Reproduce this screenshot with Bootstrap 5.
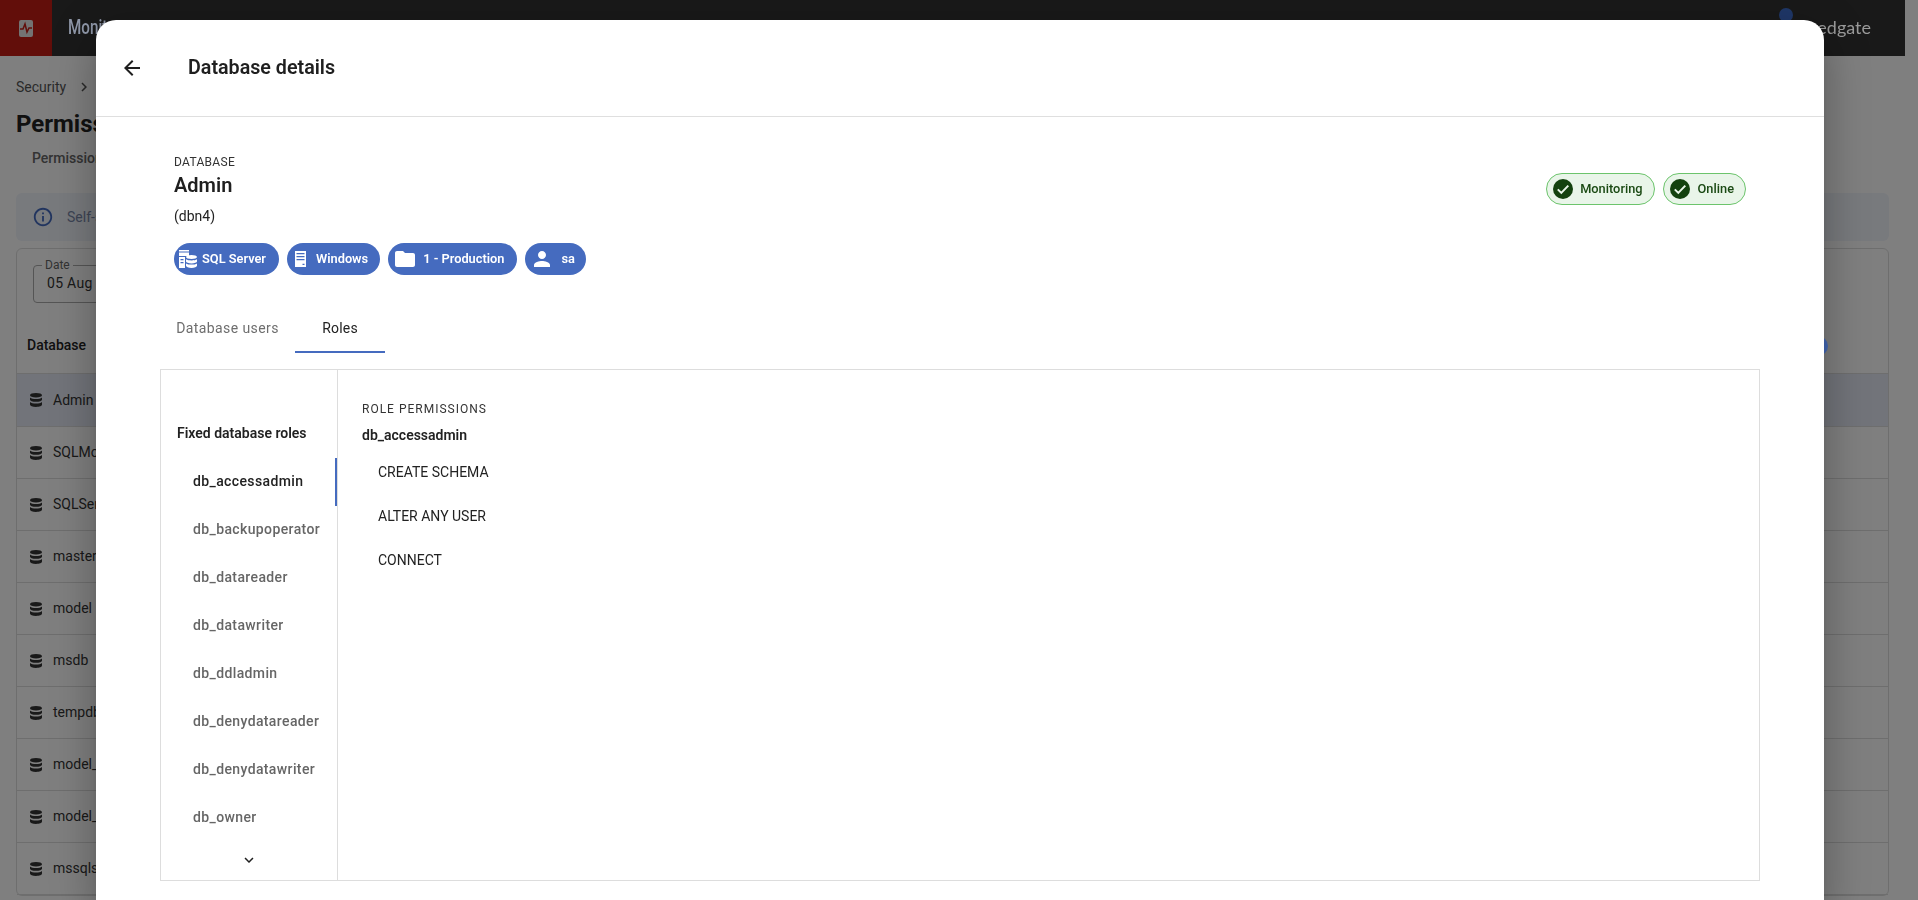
<!DOCTYPE html>
<html lang="en">
<head>
  <meta charset="UTF-8" />
  <meta name="viewport" content="width=device-width, initial-scale=1.0"/>
  <title>Database details</title>
  <link href="https://cdn.jsdelivr.net/npm/bootstrap@5.3.0/dist/css/bootstrap.min.css" rel="stylesheet">
  <style>
    body { font-family: Roboto, "Liberation Sans", sans-serif; font-size: 14px; color: #1f1f1f; overflow: hidden; height: 900px; background: #fff; }

    /* page behind the dialog */
    .page-wrap { width: 1905px; }
    .top-strip { height: 56px; background: #333; }
    .brand-box { width: 52px; background: #c41c14; }
    .brand-name { font-size: 20px; font-weight: 500; color: #8f97a8; margin-left: 16px; padding-top: 12px; transform: scaleX(.76); transform-origin: left; position: relative; z-index: 1051; }
    .vendor-dot { width: 14px; height: 14px; border-radius: 50%; background: #3f6fd0; margin-top: 8px; margin-right: 18px; }
    .vendor-name { font-size: 18px; color: #9a9a9a; margin-top: 15px; margin-right: 34px; line-height: 24px; font-family: Lato, sans-serif; position: relative; z-index: 1051; }
    .crumbs { padding: 17px 16px 0; height: 45px; line-height: 16px; color: #555; display: flex; gap: 9px; align-items: center; }
    .page-title { font-size: 24px; font-weight: 700; margin: 0; padding-left: 16px; line-height: 30px; height: 42px; color: #222; padding-top: 8px; }
    .page-tab { padding-left: 32px; color: #666; font-size: 14px; height: 50px; line-height: 20px; font-weight: 500; padding-top: 5px; }
    .notice { margin: 0 16px; height: 48px; background: #f0f4fb; border-radius: 6px; display: flex; align-items: center; padding-left: 16px; gap: 13px; color: #456bbf; }
    .notice span { color: #7a88a8; }
    .grid-card { margin: 7px 16px 0; border: 1px solid #ddd; border-radius: 6px; background: #fff; }
    .date-box { margin: 16px 0 0 16px; width: 200px; height: 38px; border: 1px solid #aaa; border-radius: 4px; padding: 7px 0 0 13px; position: relative; font-size: 14px; color: #333; letter-spacing: .3px; }
    .date-box span { position: absolute; top: -8px; left: 8px; font-size: 12px; background: #fff; padding: 0 3px; color: #666; line-height: 14px; letter-spacing: 0; }
    .grid-head { height: 71px; padding: 32px 10px 0; font-weight: 500; color: #222; position: relative; border-bottom: 1px solid #ddd; }
    .head-dot { position: absolute; right: 60px; bottom: 17px; width: 20px; height: 20px; border-radius: 50%; background: #4469b8; z-index: 1052; }
    .grid-row { height: 52px; border-bottom: 1px solid #ddd; display: flex; align-items: center; padding-left: 11px; gap: 9px; color: #333; }
    .grid-row.picked { height: 53px; background: #e4e8f4; }

    /* dialog */
    .sheet-dialog.modal-dialog { max-width: none; width: 1728px; height: 880px; margin: 20px 0 0 96px; }
    .sheet-dialog .modal-content { border: 0; border-radius: 20px 20px 0 0; height: 880px; box-shadow: 0 11px 15px -7px rgba(0,0,0,.2), 0 24px 38px 3px rgba(0,0,0,.14), 0 9px 46px 8px rgba(0,0,0,.12); }
    .sheet-dialog .modal-header { height: 97px; padding: 0 0 0 24px; border-bottom: 1px solid #dfdfdf; gap: 44px; border-radius: 0; }
    .sheet-title { font-size: 19.7px; font-weight: 600; line-height: 24px; color: #1f1f1f; margin: 0; }
    .info-band { padding: 38px 78px 0; }
    .over-label { font-size: 12px; line-height: 14px; color: #333; letter-spacing: .3px; }
    .db-name { font-size: 20px; font-weight: 600; line-height: 24px; margin: 4px 0 0; color: #1f1f1f; }
    .db-sub { line-height: 16px; margin-top: 11px; color: #222; }
    .chip-row { margin-top: 19px; gap: 8px; }
    .blue-chip { height: 32px; border-radius: 16px; background: #456bbf; color: #fff; font-size: 12.8px; font-weight: 600; display: flex; align-items: center; padding: 0 12px 0 5px; }
    .chip-sql { gap: 5px; padding-right: 13px; }
    .chip-win { gap: 10px; padding-left: 8px; }
    .chip-folder { gap: 6px; padding-right: 13px; }
    .chip-user { gap: 7px; padding-right: 11px; }
    .status-wrap { gap: 8px; padding-top: 18px; }
    .green-chip { height: 32px; border-radius: 16px; background: #e9f5e9; border: 1px solid #6cc46c; color: #1b4a14; font-size: 12.8px; font-weight: 500; display: flex; align-items: center; padding: 0 11px 0 6px; gap: 7px; }
    .green-chip.chip-last { gap: 8px; }
    .tab-strip { margin: 28px 0 0 78px; height: 50px; }
    .tab-strip .nav-link { padding: 0; height: 50px; line-height: 50px; text-align: center; color: #6e6e6e; font-size: 14px; letter-spacing: .4px; border-radius: 0; margin: 0; }
    .tab-strip .nav-item:first-child .nav-link { width: 119px; margin-left: -6px; }
    .tab-strip .nav-link.on { width: 90px; margin-left: 8px; color: #222; border-bottom: 2px solid #456bbf; letter-spacing: .2px; }
    .roles-box { margin: 16px 64px 0; height: 512px; border: 1px solid #ddd; }
    .roles-side { width: 177px; flex: none; border-right: 1px solid #ddd; padding-top: 53px; position: relative; }
    .side-head { font-size: 14px; line-height: 20px; padding-left: 16px; margin-bottom: 15px; color: #222; font-weight: 600; }
    .role-item { height: 48px; line-height: 46px; padding: 0 0 0 32px; color: #666; font-weight: 500; letter-spacing: .38px; border: 0; border-radius: 0; white-space: nowrap; }
    .role-item.on { color: #222; border-right: 2px solid #456bbf; }
    .more-btn { height: 22px; margin-top: 9px; }
    .roles-main { padding: 31px 24px; }
    .perm-label { font-size: 12px; letter-spacing: 1px; line-height: 16px; color: #333; }
    .perm-role { font-weight: 600; line-height: 20px; margin-top: 8px; color: #222; }
    .perm-item { height: 44px; line-height: 44px; padding: 0 0 0 16px; border: 0; color: #222; background: none; }
    .perm-list { margin-top: 5px; }
    .ico { display: block; flex: none; fill: currentColor; }
  </style>
</head>
<body>
  <svg width="0" height="0" class="position-absolute">
    <symbol id="i-db" viewBox="0 0 16 16"><path d="M8 1c3.500 0 6 .9 6 2.200S11.500 5.400 8 5.400 2 4.500 2 3.200 4.500 1 8 1zM2 5.400c1.200 1 3.500 1.500 6 1.500s4.800-.5 6-1.500v2.300c0 1.200-2.500 2.100-6 2.100s-6-.9-6-2.100zM2 9.900c1.200 1 3.500 1.500 6 1.500s4.800-.5 6-1.500v2.700C14 14 11.500 15 8 15s-6-1-6-2.400z"/></symbol>
    <symbol id="i-sql" viewBox="0 0 18 18"><path d="M0 0h10v1.500H0zM0 2.500h10V6H0zM0 7h6v11H0z" fill-rule="evenodd"/><path d="M1.500 9v1.200h3V9zm0 3v1.200h3V12z" fill="#456bbf"/><path d="M12.500 5c3 0 5.500.8 5.500 2s-2.500 2-5.500 2-5.500-.8-5.500-2 2.500-2 5.500-2zM7 9.200c1.200.8 3.200 1.200 5.500 1.200s4.300-.4 5.500-1.200v2.300c0 1-2.500 1.900-5.500 1.900S7 12.500 7 11.500zM7 13.400c1.200.8 3.200 1.200 5.500 1.200s4.300-.4 5.500-1.200v2.400c0 1.200-2.500 2.200-5.500 2.200S7 17 7 15.800z"/></symbol>
    <symbol id="i-win" viewBox="0 0 11 16"><path d="M0 0h11v16H0zM1.500 2v1.200h8V2zm0 3v1.200h8V5zm0 3v1.200h8V8zM7.500 12.800V14h2v-1.200z" fill-rule="evenodd"/></symbol>
    <symbol id="i-folder" viewBox="0 0 24 24"><path d="M10 4H4c-1.100 0-1.990.9-1.990 2L2 18c0 1.100.9 2 2 2h16c1.100 0 2-.9 2-2V8c0-1.100-.9-2-2-2h-8l-2-2z"/></symbol>
    <symbol id="i-user" viewBox="0 0 24 24"><path d="M12 12c2.210 0 4-1.790 4-4s-1.790-4-4-4-4 1.790-4 4 1.790 4 4 4zm0 2c-2.670 0-8 1.340-8 4v2h16v-2c0-2.660-5.330-4-8-4z"/></symbol>
    <symbol id="i-ok" viewBox="0 0 20 20"><circle cx="10" cy="10" r="10" fill="#14420f"/><path d="M4.800 10.400l3.500 3.500 7-7.300" fill="none" stroke="#e9f5e9" stroke-width="2"/></symbol>
  </svg>

  <div class="page-wrap">
    <div class="top-strip d-flex">
      <div class="brand-box d-flex align-items-center justify-content-center">
        <svg width="14" height="17" viewBox="0 0 14 17"><rect width="14" height="17" rx="2" fill="#e6e6e6"/><path d="M1 9h3l2-5 2 8 2-4h3" fill="none" stroke="#c41c14" stroke-width="1.500"/></svg>
      </div>
      <div class="brand-name">Monitor</div>
      <div class="ms-auto d-flex">
        <div class="vendor-dot"></div>
        <div class="vendor-name">redgate</div>
      </div>
    </div>
    <div class="crumbs"><span>Security</span><svg class="ico" width="18" height="18" viewBox="0 0 24 24"><path d="M10 6 8.590 7.410 13.170 12l-4.580 4.590L10 18l6-6z"/></svg></div>
    <h1 class="page-title">Permissions</h1>
    <div class="page-tab">Permissions</div>
    <div class="notice">
      <svg class="ico" width="22" height="22" viewBox="0 0 24 24"><path d="M11 7h2v2h-2zm0 4h2v6h-2zm1-9C6.480 2 2 6.480 2 12s4.480 10 10 10 10-4.480 10-10S17.520 2 12 2zm0 18c-4.410 0-8-3.590-8-8s3.590-8 8-8 8 3.590 8 8-3.590 8-8 8z"/></svg>
      <span>Self-service</span>
    </div>
    <div class="grid-card">
      <div class="date-box"><span>Date</span>05 Aug 2024</div>
      <div class="grid-head">Database<div class="head-dot"></div></div>
      <div class="grid-row picked"><svg class="ico" width="16" height="16"><use href="#i-db"/></svg>Admin</div>
      <div class="grid-row"><svg class="ico" width="16" height="16"><use href="#i-db"/></svg>SQLMonitor</div>
      <div class="grid-row"><svg class="ico" width="16" height="16"><use href="#i-db"/></svg>SQLServer</div>
      <div class="grid-row"><svg class="ico" width="16" height="16"><use href="#i-db"/></svg>master</div>
      <div class="grid-row"><svg class="ico" width="16" height="16"><use href="#i-db"/></svg>model</div>
      <div class="grid-row"><svg class="ico" width="16" height="16"><use href="#i-db"/></svg>msdb</div>
      <div class="grid-row"><svg class="ico" width="16" height="16"><use href="#i-db"/></svg>tempdb</div>
      <div class="grid-row"><svg class="ico" width="16" height="16"><use href="#i-db"/></svg>model_msdb</div>
      <div class="grid-row"><svg class="ico" width="16" height="16"><use href="#i-db"/></svg>model_replicated</div>
      <div class="grid-row"><svg class="ico" width="16" height="16"><use href="#i-db"/></svg>mssqlsystemresource</div>
    </div>
  </div>

  <div class="modal-backdrop show"></div>
  <div class="modal d-block">
    <div class="modal-dialog sheet-dialog">
      <div class="modal-content">
        <div class="modal-header justify-content-start">
          <svg class="ico" width="24" height="24" viewBox="0 0 24 24"><path d="M20 11H7.830l5.590-5.590L12 4l-8 8 8 8 1.410-1.410L7.830 13H20v-2z"/></svg>
          <h5 class="sheet-title">Database details</h5>
        </div>
        <div class="info-band d-flex justify-content-between">
          <div>
            <div class="over-label">DATABASE</div>
            <div class="db-name">Admin</div>
            <div class="db-sub">(dbn4)</div>
            <div class="chip-row d-flex">
              <div class="blue-chip chip-sql"><svg class="ico" width="18" height="18"><use href="#i-sql"/></svg><span>SQL Server</span></div>
              <div class="blue-chip chip-win"><svg class="ico" width="11" height="16"><use href="#i-win"/></svg><span>Windows</span></div>
              <div class="blue-chip chip-folder"><svg class="ico" width="24" height="24"><use href="#i-folder"/></svg><span>1 - Production</span></div>
              <div class="blue-chip chip-user"><svg class="ico" width="24" height="24"><use href="#i-user"/></svg><span>sa</span></div>
            </div>
          </div>
          <div class="status-wrap d-flex align-items-start">
            <div class="green-chip"><svg class="ico" width="20" height="20"><use href="#i-ok"/></svg>Monitoring</div>
            <div class="green-chip chip-last"><svg class="ico" width="20" height="20"><use href="#i-ok"/></svg>Online</div>
          </div>
        </div>
        <ul class="nav tab-strip">
          <li class="nav-item"><a class="nav-link" href="#">Database users</a></li>
          <li class="nav-item"><a class="nav-link on" href="#">Roles</a></li>
        </ul>
        <div class="roles-box d-flex">
          <div class="roles-side">
            <div class="side-head">Fixed database roles</div>
            <div class="list-group list-group-flush">
              <div class="role-item on">db_accessadmin</div>
              <div class="role-item">db_backupoperator</div>
              <div class="role-item">db_datareader</div>
              <div class="role-item">db_datawriter</div>
              <div class="role-item">db_ddladmin</div>
              <div class="role-item">db_denydatareader</div>
              <div class="role-item">db_denydatawriter</div>
              <div class="role-item">db_owner</div>
            </div>
            <div class="more-btn d-flex justify-content-center"><svg class="ico" width="18" height="18" viewBox="0 0 24 24"><path d="M16.590 8.590 12 13.170 7.410 8.590 6 10l6 6 6-6z"/></svg></div>
          </div>
          <div class="roles-main flex-grow-1">
            <div class="perm-label">ROLE PERMISSIONS</div>
            <div class="perm-role">db_accessadmin</div>
            <div class="list-group list-group-flush perm-list">
              <div class="list-group-item perm-item">CREATE SCHEMA</div>
              <div class="list-group-item perm-item">ALTER ANY USER</div>
              <div class="list-group-item perm-item">CONNECT</div>
            </div>
          </div>
        </div>
      </div>
    </div>
  </div>
  <script src="https://cdn.jsdelivr.net/npm/bootstrap@5.3.0/dist/js/bootstrap.bundle.min.js"></script>
</body>
</html>
